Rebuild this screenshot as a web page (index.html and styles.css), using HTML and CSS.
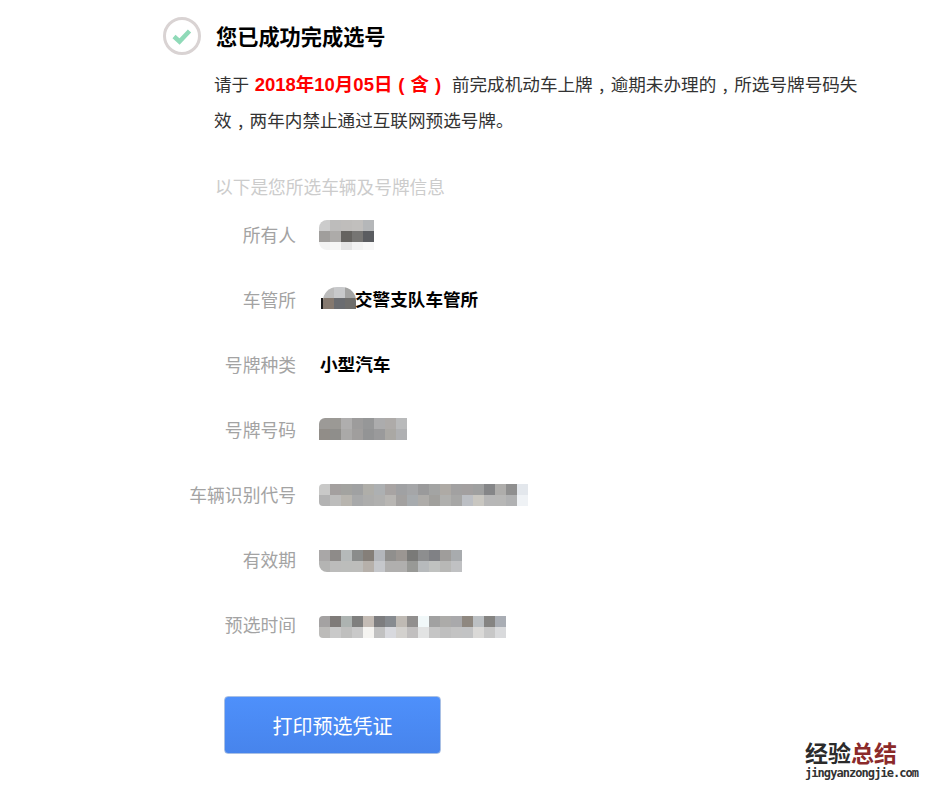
FILE: index.html
```html
<!DOCTYPE html>
<html lang="zh-CN">
<head>
<meta charset="utf-8">
<title>您已成功完成选号</title>
<link rel="stylesheet" href="styles.css">
</head>
<body>
<main class="page">
  <header class="head">
    <svg class="check" width="38" height="38" viewBox="0 0 38 38" aria-hidden="true">
      <circle cx="19" cy="19" r="17.5" fill="#fff" stroke="#d9d3d3" stroke-width="3"/>
      <path d="M11 19.5l5.5 5L26.500 14" fill="none" stroke="#8fdab8" stroke-width="4.500"/>
    </svg>
    <h1 class="title">您已成功完成选号</h1>
  </header>
  <p class="notice">请于 <strong class="deadline">2018年10月05日<span class="pn">(</span>含<span class="pn">)</span></strong> 前完成机动车上牌<span class="pn">,</span>逾期未办理的<span class="pn">,</span>所选号牌号码失效<span class="pn">,</span>两年内禁止通过互联网预选号牌。</p>
  <p class="sub">以下是您所选车辆及号牌信息</p>
  <dl class="info">
    <div class="row">
      <dt class="label">所有人</dt>
      <dd class="value"><span class="mosaic mosaic-tall" data-cols="5" data-colors="ccc,bdbcbb,bfbdbb,c1bfbd,b5b7b9,a09e9c,adaba9,656360,767573,5a5c60,f3f3f3,f6f6f5,e4e4e4,f2f2f2,f7f7f7"></span></dd>
    </div>
    <div class="row">
      <dt class="label">车管所</dt>
      <dd class="value"><span class="org-scrap"></span><span class="mosaic mosaic-org" data-cols="3" data-colors="bcbcbc,c8c9cb,a3a3a2,85796f,6a6c70,6f6e6c"></span>交警支队车管所</dd>
    </div>
    <div class="row">
      <dt class="label">号牌种类</dt>
      <dd class="value">小型汽车</dd>
    </div>
    <div class="row">
      <dt class="label">号牌号码</dt>
      <dd class="value"><span class="mosaic mosaic-tl" data-cols="8" data-colors="9c9a97,9b9995,afaeae,9d9c9c,969798,acacad,aeaba9,b9babb,918d88,8f8e8b,aaa9a8,a09e9d,939495,9a9a9b,aaa8a4,afb0b2"></span></dd>
    </div>
    <div class="row">
      <dt class="label">车辆识别代号</dt>
      <dd class="value"><span class="mosaic mosaic-vin" data-cols="19" data-colors="c9c9c8,a4a09f,a3a3a0,a0a1a2,afaea9,adb0b2,a8a4a3,a0a1a3,a5a6a8,9a9a9b,a3a4a3,aeaaa5,a2a1a1,a3a0a0,9fa0a0,858688,aeadab,8f8f8f,e3e7ec,b3b3b3,bdbdbc,b8b5af,a8a9aa,adadac,b0b0af,b8b6b3,a3a1a0,a7abae,aeaca9,a1a09d,b0b0ae,a7a7a6,bcbfc4,c9c7c1,b7b7b7,b7b7b6,b0b1b2,eff2f5"></span></dd>
    </div>
    <div class="row">
      <dt class="label">有效期</dt>
      <dd class="value"><span class="mosaic mosaic-bl" data-cols="13" data-colors="a9a7a7,8e8b89,b5b9b9,8a8c8b,857f79,b3b6bb,908f8d,9b9692,7a7a78,8d8e8f,808185,9f9d9b,a8abae,b4b4b3,bcbcbb,bcbdbb,bdbdbb,b6b0aa,c5c7cb,b0afae,b0afae,989996,b7babc,c0c2c0,b8b8b6,c0c1c3"></span></dd>
    </div>
    <div class="row">
      <dt class="label">预选时间</dt>
      <dd class="value"><span class="mosaic mosaic-time" data-cols="17" data-colors="a4a2a2,7f7b79,adb3b1,7f7f7e,c4bcb5,7d7d7f,878b90,bfbab4,918f8e,f1f8f9,a1a1a1,acaba9,a9a9ab,8f8880,bcc0c3,858482,a9adb4,bcbbb9,c9c9c9,bfbfbe,c9c9c9,f5f4f1,c1c1c1,d8d9de,d3d1ce,c1bfbf,e2e3e3,c5c5c5,bfbfbf,c3c3c3,c2c3c4,dad9d7,c7c7c7,d9dadc"></span></dd>
    </div>
  </dl>
  <button class="print" type="button">打印预选凭证</button>
</main>
<aside class="mark">
  <div class="mark-cn">经验<span class="mark-red">总结</span></div>
  <div class="mark-en">jingyanzongjie.com</div>
</aside>
<script src="mosaic.js"></script>
</body>
</html>
```
FILE: styles.css
```css
* { box-sizing: border-box; }
html, body { margin: 0; padding: 0; }
body {
  width: 933px;
  height: 790px;
  overflow: hidden;
  position: relative;
  background: #fff;
  color: #333;
  font-family: "Noto Sans CJK SC", "Liberation Sans", sans-serif;
  font-size: 17.6px;
}
.page { padding: 17px 0 0 163px; }
.head { display: flex; align-items: center; height: 38px; }
.check { flex: none; }
.title {
  margin: 0 0 0 15px;
  font-size: 21.2px;
  font-weight: 700;
  line-height: 38px;
  color: #000;
}
.notice {
  width: 646px;
  margin: 11px 0 0 51px;
  line-height: 35px;
  color: #333;
}
.deadline {
  margin: 0 1px 0 1.5px;
  color: #f00;
  font-size: 18.5px;
  font-weight: 700;
  font-family: "Liberation Sans", "Noto Sans CJK SC", sans-serif;
}
.pn { display: inline-block; width: 18px; text-align: center; }
.sub {
  margin: 32px 0 0 52px;
  font-size: 17.7px;
  line-height: 34px;
  color: #ccc;
}
.info { margin: 0; }
.row {
  display: flex;
  align-items: center;
  height: 65px;
}
.row:first-child { margin-top: -2px; }
.label {
  width: 133px;
  text-align: right;
  font-size: 17.8px;
  color: #a3a3a3;
  line-height: 30px;
}
.value {
  display: flex;
  align-items: center;
  margin: 0 0 0 24px;
  font-weight: 700;
  color: #000;
  line-height: 30px;
}
.mosaic {
  display: grid;
  grid-auto-rows: 11px;
  grid-auto-columns: 11px;
  overflow: hidden;
  margin-left: -1px;
}
.mosaic i { display: block; width: 11px; height: 11px; }
.mosaic-tall { grid-template-rows: 11px 11px 8px; border-radius: 8px 0 0 8px; margin-top: 2px; }
.org-scrap {
  width: 2px;
  height: 11px;
  margin: 9px 0 0 1px;
  background: #1c1c1c;
}
.mosaic-org {
  margin: 0 -1px 2px 0;
  border-radius: 14px 14px 0 0;
  width: 33px;
}
.mosaic-tl { border-radius: 6px 0 0 0; margin-top: 1px; }
.mosaic-vin { border-radius: 4px 0 0 4px; margin-top: 3px; }
.mosaic-bl { border-radius: 0 0 0 8px; margin-top: 5px; }
.mosaic-time { border-radius: 4px 0 0 4px; margin-top: 7px; }
.print {
  display: block;
  width: 217px;
  height: 58px;
  margin: 40px 0 0 61px;
  padding: 0;
  border: 1px solid #a9c0e4;
  border-radius: 4px;
  background: linear-gradient(#4e90fb, #4784ec);
  color: #fff;
  font: 400 20px "Noto Sans CJK SC", sans-serif;
}
.mark {
  position: absolute;
  left: 805px;
  top: 738px;
  width: 125px;
}
.mark-cn {
  font-size: 23px;
  line-height: 28px;
  font-weight: 700;
  color: #2b2b2b;
}
.mark-red { color: #8b2a2a; }
.mark-en {
  font-family: "DejaVu Sans Mono", monospace;
  font-size: 12px;
  line-height: 14px;
  letter-spacing: -0.94px;
  font-weight: 700;
  color: #333;
  white-space: nowrap;
}
```
FILE: mosaic.js
```js
document.querySelectorAll('.mosaic').forEach(function (m) {
  var cols = +m.dataset.cols;
  m.style.gridTemplateColumns = 'repeat(' + cols + ', 11px)';
  m.dataset.colors.split(',').forEach(function (c) {
    var cell = document.createElement('i');
    cell.style.background = '#' + c;
    m.appendChild(cell);
  });
});
```
